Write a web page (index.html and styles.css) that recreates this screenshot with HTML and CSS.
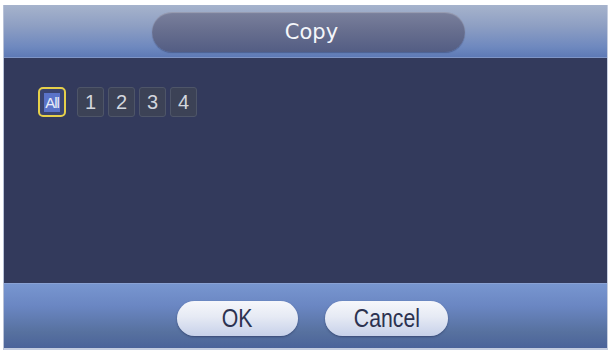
FILE: index.html
```html
<!DOCTYPE html>
<html>
<head>
<meta charset="utf-8">
<link rel="stylesheet" href="styles.css">
</head>
<body>
<div class="window">
  <div class="header">
    <div class="title">Copy</div>
  </div>
  <div class="content">
    <div class="channels">
      <div class="chan chan-all"><span>All</span></div>
      <div class="chan">1</div>
      <div class="chan">2</div>
      <div class="chan">3</div>
      <div class="chan">4</div>
    </div>
  </div>
  <div class="footer">
    <div class="btn btn-ok"><span>OK</span></div>
    <div class="btn btn-cancel"><span>Cancel</span></div>
  </div>
</div>
</body>
</html>
```
FILE: styles.css
```css
html, body {
  margin: 0;
  padding: 0;
  background: #ffffff;
}
body {
  width: 612px;
  height: 354px;
  overflow: hidden;
}
.window {
  margin: 5px 0 0 3px;
  width: 605px;
  height: 345px;
  display: flex;
  flex-direction: column;
  background: #333a5c;
  border-left: 1px solid #b8c2d8;
  border-right: 1px solid #c6cee0;
  box-sizing: border-box;
}
.header {
  height: 53px;
  flex: none;
  box-sizing: border-box;
  padding: 7px 0 0 148px;
  background: linear-gradient(to bottom, #a6b3cc 0%, #8e9fc3 40%, #6f89bf 80%, #5e7ab6 100%);
  border-bottom: 1px solid #7f95c6;
}
.title {
  width: 313px;
  height: 40px;
  border-radius: 20px;
  background: linear-gradient(to bottom, #7a809c 0%, #686f8f 45%, #535d84 100%);
  box-shadow: inset 0 1px 1px rgba(255,255,255,0.25), 0 1px 1px rgba(40,50,90,0.4);
  color: #f4f6fa;
  font-family: "DejaVu Sans", sans-serif;
  font-size: 21px;
  line-height: 41px;
  text-align: center;
  text-indent: 6px;
}
.content {
  flex: 1;
  padding: 29px 0 0 34px;
  background: #333a5c;
}
.channels {
  display: flex;
  gap: 4px;
}
.chan {
  width: 27px;
  height: 30px;
  box-sizing: border-box;
  border: 1px solid #4e5568;
  border-radius: 3px;
  background: #3c4256;
  color: #d2d6de;
  font-family: "Liberation Sans", sans-serif;
  font-size: 20px;
  line-height: 28px;
  text-align: center;
}
.chan-all {
  width: 28px;
  margin-right: 7px;
  border: 2px solid #e6d04a;
  border-radius: 5px;
  background: #3a4470;
  display: flex;
  align-items: center;
  justify-content: center;
}
.chan-all span {
  display: block;
  background: #5a73c8;
  color: #e8ecf8;
  font-size: 15px;
  line-height: 19px;
  padding: 0 1px;
  letter-spacing: -1px;
}
.footer {
  height: 67px;
  flex: none;
  box-sizing: border-box;
  display: flex;
  gap: 27px;
  padding: 17px 0 0 173px;
  background: linear-gradient(to bottom, #7896d0 0%, #6a86c2 35%, #57719f 75%, #4b639a 100%);
  border-top: 1px solid #8aa2d4;
  border-bottom: 2px solid #c5cde0;
}
.btn {
  height: 35px;
  border-radius: 18px;
  background: linear-gradient(to bottom, #f6f7fb 0%, #e6eaf4 45%, #c7d1ea 100%);
  box-shadow: 0 1px 2px rgba(30,40,80,0.5);
  color: #2c3250;
  font-family: "Liberation Sans", sans-serif;
  font-size: 25px;
  line-height: 35px;
  text-align: center;
}
.btn span {
  display: inline-block;
  transform: scaleX(0.85);
}
.btn-ok {
  width: 121px;
}
.btn-cancel {
  width: 123px;
}
```
